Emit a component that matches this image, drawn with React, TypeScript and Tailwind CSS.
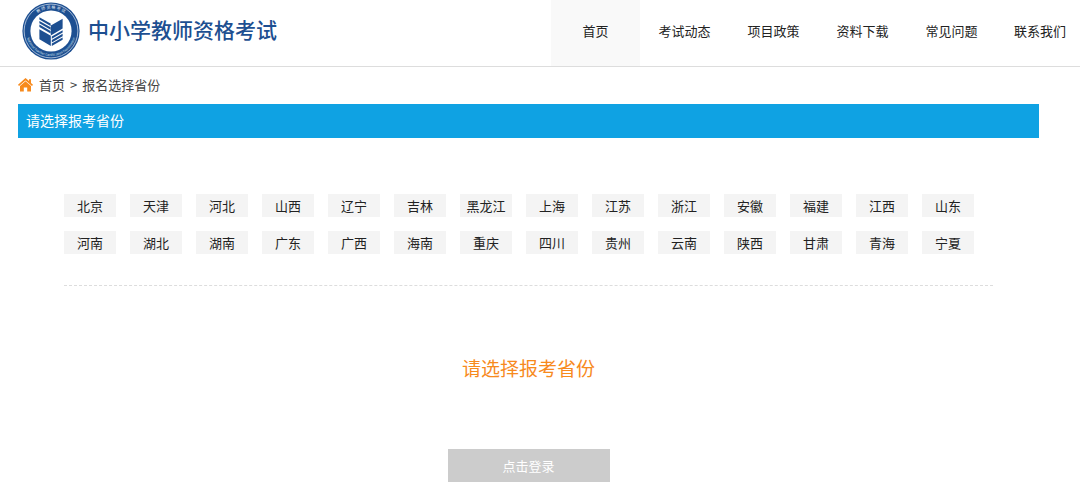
import { useState } from "react";

const NAV_ITEMS = ["首页", "考试动态", "项目政策", "资料下载", "常见问题", "联系我们"];

const PROVINCES = [
  "北京", "天津", "河北", "山西", "辽宁", "吉林", "黑龙江",
  "上海", "江苏", "浙江", "安徽", "福建", "江西", "山东",
  "河南", "湖北", "湖南", "广东", "广西", "海南", "重庆",
  "四川", "贵州", "云南", "陕西", "甘肃", "青海", "宁夏",
];

function Logo() {
  return (
    <svg viewBox="0 0 58 58" className="size-[58px] shrink-0" aria-hidden="true">
      <defs>
        <path id="ring-top" d="M 6.6 29 A 22.4 22.4 0 0 1 51.4 29" />
        <path id="ring-bottom" d="M 4 29 A 25 25 0 0 0 54 29" />
      </defs>
      <circle cx="29" cy="29" r="28.6" fill="#1d4f91" />
      <circle cx="29" cy="29" r="26.9" fill="none" stroke="#c3d2e6" strokeWidth="0.8" />
      <circle cx="29" cy="29" r="20.6" fill="#fff" />
      <text fill="#e3ebf5" fontSize="4" textAnchor="middle">
        <textPath href="#ring-top" startOffset="50%">教 师 资 格 考 试</textPath>
      </text>
      <text fill="#d5e0ee" fontSize="3.2" textAnchor="middle">
        <textPath href="#ring-bottom" startOffset="50%">National Teacher Certification Examination</textPath>
      </text>
      <g fill="#1d4f91">
        <path d="M17.4 15.2 28.6 21.6v2.4l-11.2-6.4z" />
        <path d="M17.4 18.9 28.6 25.3v2.4l-11.2-6.4z" />
        <path d="M17.4 22.6 28.6 29v2.4l-11.2-6.4z" />
        <path d="M17.4 27.2 28.8 33.8V44l-11.4-6.8z" />
        <path d="M28.8 23.4 40.6 16.8V26.6L28.8 33.4z" />
        <path d="M29.8 34.4 40.6 28.2v2.4l-10.8 6.2z" />
        <path d="M29.8 38 40.6 31.8v2.4l-10.8 6.2z" />
        <path d="M29.8 41.6 40.6 35.4v2.4L29.8 44z" />
      </g>
    </svg>
  );
}

function HomeIcon() {
  return (
    <svg viewBox="0 0 15 14" className="h-3.5 w-[15px]" fill="#f78a1d" aria-hidden="true">
      <path d="M7.5 0 11 3.1V1.2h2v3.7L15 6.8 14 8 7.5 2.4 1 8 0 6.8z" />
      <path d="M7.5 3.2 13 8V13.5H9.2V9.6H5.8V13.5H2V8z" />
    </svg>
  );
}

export default function App() {
  const [province, setProvince] = useState("");

  return (
    <div className="bg-white font-['Noto_Sans_CJK_SC',sans-serif] text-[13px] leading-5 text-[#222]">
      <header className="flex h-[67px] items-stretch justify-between border-b border-[#ddd]">
        <a href="#" className="flex items-start gap-2 pt-0.5 pl-[22px]">
          <Logo />
          <span className="text-[21px] leading-[54px] font-medium whitespace-nowrap text-[#1d4f91]">
            中小学教师资格考试
          </span>
        </a>
        <nav className="flex">
          {NAV_ITEMS.map((item, i) => (
            <a
              key={item}
              href="#"
              className={
                "flex w-[89px] items-center justify-center pb-1 whitespace-nowrap last:w-[84px] last:pl-1 " +
                (i === 0 ? "bg-[#f9f9f9]" : "")
              }
            >
              {item}
            </a>
          ))}
        </nav>
      </header>

      <main className="mr-[41px] ml-[18px]">
        <div className="flex h-[37px] items-center pb-0.5 text-[#444]">
          <HomeIcon />
          <a href="#" className="ml-1.5">首页</a>
          <span className="mx-[5px]">&gt;</span>
          <span>报名选择省份</span>
        </div>

        <h1 className="bg-[#0fa2e3] px-2 pb-0.5 text-sm leading-8 text-white">请选择报考省份</h1>

        <section className="mx-[46px] border-b border-dashed border-[#ddd] pt-14 pb-[31px]">
          <div className="flex flex-wrap gap-3.5">
            {PROVINCES.map((name) => (
              <button
                key={name}
                type="button"
                onClick={() => setProvince(name)}
                className={
                  "h-[23px] w-[52px] leading-[23px] " +
                  (name === province ? "bg-[#0fa2e3] text-white" : "bg-[#f4f4f4]")
                }
              >
                {name}
              </button>
            ))}
          </div>
        </section>

        <section className="flex flex-col items-center pt-[67px] pb-3">
          <p className="text-[19px] leading-[30px] text-[#f78a1d]">{province || "请选择报考省份"}</p>
          <button
            type="button"
            disabled={!province}
            className="mt-[66px] h-[33px] w-[162px] bg-[#0fa2e3] text-white disabled:bg-[#ccc]"
          >
            点击登录
          </button>
        </section>
      </main>
    </div>
  );
}
